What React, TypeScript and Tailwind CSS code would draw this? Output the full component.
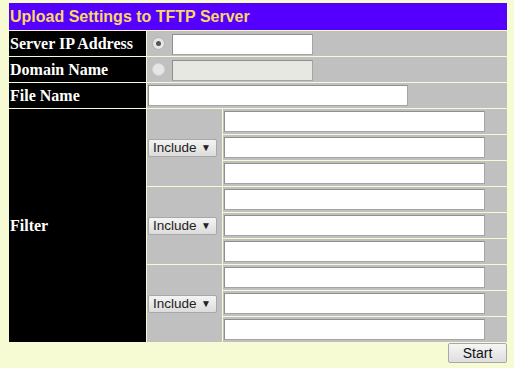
import React from "react";

function Radio({ checked, dim }: { checked?: boolean; dim?: boolean }) {
  return (
    <span
      className={`ml-[5px] flex h-[13px] w-[13px] shrink-0 items-center justify-center rounded-full border ${
        dim ? "border-[#d2d2d2] bg-[#e6e6e6]" : "border-[#b0b0b0] bg-[#e6e6e6]"
      }`}
    >
      {checked && <span className="h-[5px] w-[5px] rounded-full bg-[#555]" />}
    </span>
  );
}

function TextBox({ w, disabled }: { w: string; disabled?: boolean }) {
  return (
    <input
      type="text"
      disabled={disabled}
      className={`${w} h-[21px] border border-[#a5a5a5] border-t-[#8f8f8f] border-l-[#8f8f8f] px-[2px] text-[13px] outline-none ${
        disabled ? "bg-[#e8e8e3]" : "bg-white"
      }`}
    />
  );
}

function IncludeSelect() {
  return (
    <div className="ml-px flex h-[18px] w-[69px] items-center justify-between rounded-[2px] border border-[#a8a8a8] bg-gradient-to-b from-[#f4f4f4] to-[#dcdcdc] pl-[4px] pr-[5px] text-[13.5px] leading-none text-[#222]">
      <span>Include</span>
      <span className="text-[10px]">▼</span>
    </div>
  );
}

export default function App() {
  const label = "flex items-center bg-black pl-px text-[16px] font-bold text-white";
  const serif = { fontFamily: '"Liberation Serif", "Times New Roman", serif' };
  const groups = [0, 1, 2];
  return (
    <div
      className="min-h-[368px] w-[514px] bg-[#f6fbd3] pl-[9px] pt-[3px]"
      style={{ fontFamily: '"Liberation Sans", Arial, sans-serif' }}
    >
      <div className="grid w-[498px] grid-cols-[137px_75px_284px] grid-rows-[27px_repeat(12,25px)] gap-px">
        <div className="col-span-3 flex items-center bg-[#5500ff] pl-px text-[16px] font-bold text-[#f9d866]">
          Upload Settings to TFTP Server
        </div>

        <div className={label} style={serif}>Server IP Address</div>
        <div className="col-span-2 flex items-center bg-[#c0c0c0]">
          <Radio checked />
          <span className="ml-[7px]">
            <TextBox w="w-[141px]" />
          </span>
        </div>

        <div className={label} style={serif}>Domain Name</div>
        <div className="col-span-2 flex items-center bg-[#c0c0c0]">
          <Radio dim />
          <span className="ml-[7px]">
            <TextBox w="w-[141px]" disabled />
          </span>
        </div>

        <div className={label} style={serif}>File Name</div>
        <div className="col-span-2 flex items-center bg-[#c0c0c0] pl-px">
          <TextBox w="w-[260px]" />
        </div>

        <div className={`${label} row-span-9`} style={serif}>Filter</div>
        {groups.map((g) => (
          <React.Fragment key={g}>
            <div className="row-span-3 flex items-center bg-[#c0c0c0]">
              <IncludeSelect />
            </div>
            {[0, 1, 2].map((i) => (
              <div key={i} className="col-start-3 flex items-center bg-[#c0c0c0] pl-px">
                <TextBox w="w-[261px]" />
              </div>
            ))}
          </React.Fragment>
        ))}
      </div>
      <div className="mt-px flex w-[498px] justify-end">
        <button className="h-[20px] w-[59px] rounded-[2px] border border-[#a8a8a8] bg-gradient-to-b from-[#f6f6f6] to-[#dedede] text-[14px] leading-none text-[#111]">
          Start
        </button>
      </div>
    </div>
  );
}
